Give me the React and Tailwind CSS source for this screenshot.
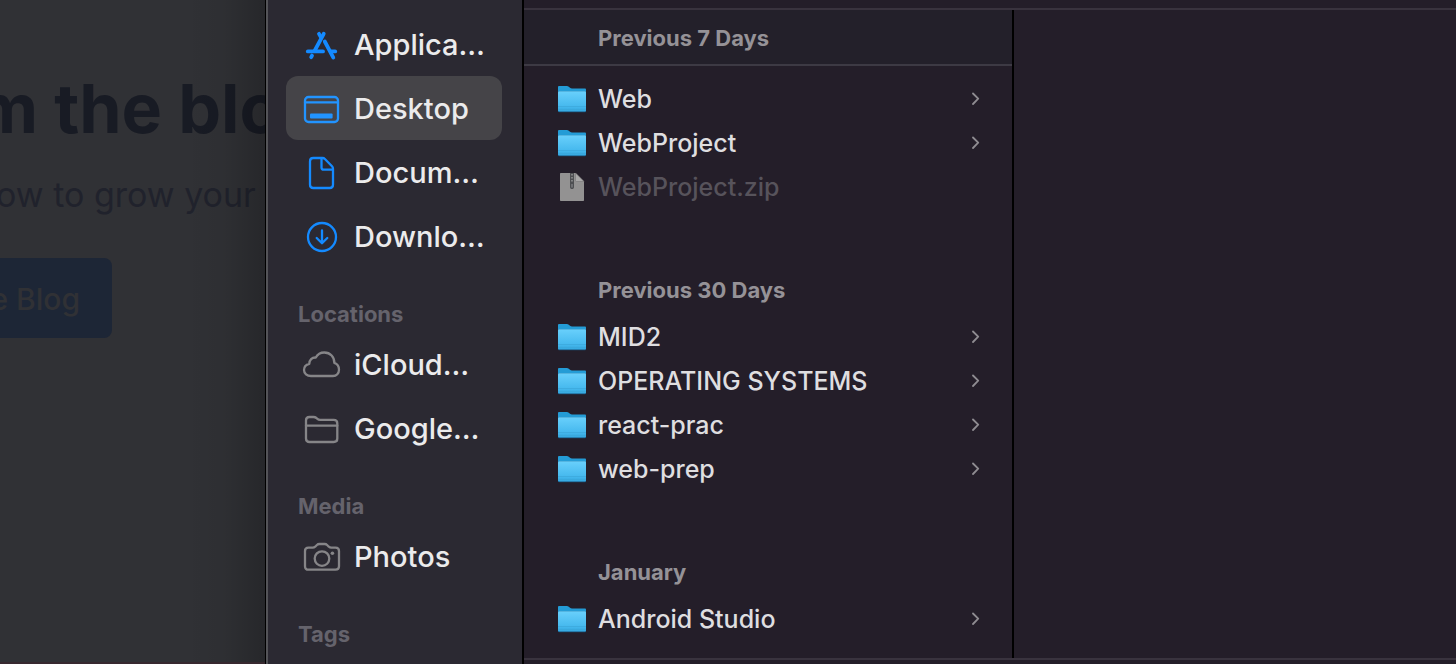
import React from "react";

const AppsIcon = () => (
  <g strokeWidth="3.8">
    <path d="M19.700 7.800 10.800 24.500" />
    <path d="M15 7.800l2 3.600" />
    <path d="M20.800 15.500 29.300 31.600" />
    <path d="M8 29.600l-.8 1.600" />
    <path d="M3.800 25.400H19" />
    <path d="M27 25.400h4.200" />
  </g>
);

const DesktopIcon = () => (
  <g>
    <rect x="1" y="7" width="33" height="25" rx="3.6" />
    <path d="M1 12.400h33" />
    <rect x="6" y="23.400" width="22.600" height="5" rx="1" fill="currentColor" stroke="none" />
  </g>
);

const DocumentIcon = () => (
  <g>
    <path d="M9.300 4h9.200c1 0 1.700.3 2.400 1l7.100 7.300c.7.7 1 1.400 1 2.400v16c0 2-1.200 3.300-3.300 3.300H9.300C7.200 34 6 32.700 6 30.700V7.300C6 5.300 7.200 4 9.300 4Z" />
    <path d="M17.500 4.500v9c0 1.500.8 2.200 2.200 2.200h9" />
  </g>
);

const DownloadIcon = () => (
  <g>
    <circle cx="18" cy="19" r="14" />
    <path d="M18 12.500V25M12.700 20l5.300 5.300 5.300-5.300" />
  </g>
);

const CloudIcon = () => (
  <path d="M7 30h22c3.500 0 6-2.800 6-6.200 0-3.500-2-6-4.700-6.900C30.500 11 26.300 6.500 20.300 6.500c-3.800 0-6.800 1.800-8.500 5C8 11.200 5.300 14 5.300 17.800 2 18.600 0 21 0 24c0 3.400 3 6 7 6Z" />
);

const FolderLineIcon = () => (
  <g>
    <path d="M2 28.500v-18C2 8 3.200 7 5.500 7h4c1.300 0 2 .3 2.900 1l1 .9c.8.7 1.500 1 2.700 1h13.600c2.400 0 3.600 1.100 3.600 3.500v15.100c0 2.400-1.200 3.500-3.600 3.500H5.600C3.200 32 2 30.900 2 28.500Z" />
    <path d="M2 15.700h31.300" />
  </g>
);

const CameraIcon = () => (
  <g>
    <path d="M4.500 9.700h4.300c1.100 0 1.600-.3 2.400-1l1.700-1.700c.7-.7 1.400-1 2.500-1h5.200c1.100 0 1.800.3 2.500 1l1.700 1.700c.8.7 1.300 1 2.400 1h4.300c2.300 0 3.500 1.100 3.500 3.400v15.100c0 2.300-1.200 3.500-3.500 3.500h-27C2.200 31.700 1 30.500 1 28.200V13.100c0-2.300 1.200-3.400 3.500-3.400Z" />
    <circle cx="18" cy="20.600" r="7.300" />
    <circle cx="28.400" cy="15.200" r="1.800" fill="currentColor" stroke="none" />
  </g>
);

const sidebar = [
  {
    items: [
      { label: "Applica…", Icon: AppsIcon },
      { label: "Desktop", Icon: DesktopIcon, active: true },
      { label: "Docum…", Icon: DocumentIcon },
      { label: "Downlo…", Icon: DownloadIcon },
    ],
  },
  {
    title: "Locations",
    muted: true,
    items: [
      { label: "iCloud…", Icon: CloudIcon },
      { label: "Google…", Icon: FolderLineIcon },
    ],
  },
  { title: "Media", muted: true, items: [{ label: "Photos", Icon: CameraIcon }] },
  { title: "Tags", items: [] },
];

const recent = [
  { name: "Web" },
  { name: "WebProject" },
  { name: "WebProject.zip", zip: true },
];

const groups = [
  {
    title: "Previous 30 Days",
    files: [
      { name: "MID2" },
      { name: "OPERATING SYSTEMS" },
      { name: "react-prac" },
      { name: "web-prep" },
    ],
  },
  { title: "January", files: [{ name: "Android Studio" }] },
];

function SidebarItem({ label, Icon, active, muted }) {
  return (
    <li>
      <button
        type="button"
        className={`flex h-16 w-full items-center gap-3.5 rounded-xl px-[18px] text-left text-[29px] leading-9 font-medium text-[#ebebec] ${active ? "bg-[#454448]" : ""}`}
      >
        <svg
          viewBox="0 0 36 36"
          fill="none"
          stroke="currentColor"
          strokeWidth="2.3"
          strokeLinecap="round"
          strokeLinejoin="round"
          aria-hidden="true"
          className={`size-9 shrink-0 overflow-visible ${muted ? "text-[#868588]" : active ? "text-[#2294ff]" : "text-[#148aff]"}`}
        >
          <Icon />
        </svg>
        <span className="pt-0.5 whitespace-nowrap">{label}</span>
      </button>
    </li>
  );
}

function FolderIcon() {
  return (
    <svg viewBox="0 0 28 28" className="size-7 shrink-0 overflow-visible" aria-hidden="true">
      <defs>
        <linearGradient id="front" x1="0" y1="0" x2="0" y2="1">
          <stop offset="0" stopColor="#69d0fc" />
          <stop offset="0.75" stopColor="#46b9ee" />
          <stop offset="1" stopColor="#36a9e0" />
        </linearGradient>
      </defs>
      <path d="M0 2.200C0 1.400.4 1 1.200 1h7.600c.9 0 1.400.3 2 .8l1.200 1c.6.5 1.100.8 2 .8h12.800c.8 0 1.200.4 1.200 1.200V26H0Z" fill="#249cd6" />
      <rect y="6.200" width="28" height="21" rx="1" fill="#17507a" />
      <rect y="6.200" width="28" height="20.200" rx="1" fill="url(#front)" />
      <path d="M0 21.500h28M0 24.400h28" stroke="#3ba6da" strokeWidth="0.7" />
    </svg>
  );
}

function ZipIcon() {
  return (
    <svg viewBox="0 0 28 28" className="size-7 shrink-0" aria-hidden="true">
      <path d="M3 0h14.500L26 8.500V27c0 .7-.3 1-1 1H3c-.7 0-1-.3-1-1V1c0-.7.3-1 1-1Z" fill="#939292" />
      <path d="M17.500 0 26 8.500h-7.500c-.7 0-1-.3-1-1Z" fill="#aaa9a9" stroke="#777677" strokeWidth="0.6" />
      <path d="M12 0h4v14c0 1.400-.8 2-2 2s-2-.6-2-2Z" fill="#4e4f52" />
      <path d="M14 1v9" stroke="#98999a" strokeWidth="1.400" strokeDasharray="1.500 1.500" />
      <path d="M14 11v3.500" stroke="#85868a" strokeWidth="1.200" />
    </svg>
  );
}

function FileRow({ name, zip }) {
  return (
    <li>
      <button
        type="button"
        className={`flex h-11 w-full items-center gap-3 pr-8 pl-[34px] text-left text-[25px] leading-8 font-medium ${zip ? "text-[#57535b]" : "text-[#dfdee0]"}`}
      >
        {zip ? <ZipIcon /> : <FolderIcon />}
        <span className="flex-1 whitespace-nowrap">{name}</span>
        {!zip && (
          <svg
            viewBox="0 0 8 14"
            fill="none"
            stroke="#8f8c91"
            strokeWidth="1.800"
            strokeLinecap="round"
            strokeLinejoin="round"
            className="h-3.5 w-2 shrink-0"
            aria-hidden="true"
          >
            <path d="M1 1.500 6.200 6.700 1 12" />
          </svg>
        )}
      </button>
    </li>
  );
}

export default function App() {
  return (
    <div className="flex h-screen overflow-hidden bg-[#241e29] font-['Inter','Liberation_Sans',sans-serif]">
      <section className="relative w-[265px] shrink-0 overflow-hidden border-b-2 border-[#37282f] bg-[#303135] pt-[66px] whitespace-nowrap">
        <h1 className="-ml-6 text-[68px] leading-[84px] font-bold text-[#181b24]">m the blo</h1>
        <p className="-ml-1 pt-6 text-[34px] leading-[42px] text-[#20222c]">ow to grow your</p>
        <a
          href="#blog"
          className="mt-[42px] flex h-20 w-28 items-center justify-end rounded-r-lg bg-[#1d2636] pt-0.5 pr-8 text-[30px] font-medium text-[#303135]"
        >
          e Blog
        </a>
        <div className="pointer-events-none absolute inset-y-0 right-0 w-20 bg-linear-to-r from-transparent via-black/5 to-black/20" />
      </section>

      <main className="flex min-w-0 flex-1 border-l border-black">
        <nav aria-label="Sidebar" className="w-[258px] shrink-0 border-r-2 border-l-2 border-r-black border-l-[#545458] bg-[#2b2932] pt-3 pr-5 pl-[18px]">
          {sidebar.map(({ title, items, muted }, i) => (
            <section key={i}>
              {title && (
                <h2 className="h-16 pt-7 pl-3 text-[22px] leading-9 font-bold text-[#65636c]">{title}</h2>
              )}
              <ul>
                {items.map((item) => (
                  <SidebarItem key={item.label} muted={muted} {...item} />
                ))}
              </ul>
            </section>
          ))}
        </nav>

        <div className="flex min-w-0 flex-1 flex-col pt-2 pb-1">
          <div className="flex min-h-0 flex-1 border-y-2 border-[#39333e]">
            <section className="w-[490px] shrink-0 overflow-hidden border-r-2 border-black">
              <h2 className="h-14 border-b-2 border-[#3d3a44] bg-[#23202a] pl-[74px] text-[22px] leading-[56px] font-bold text-[#959297]">
                Previous 7 Days
              </h2>
              <ul className="pt-[11px]">
                {recent.map((f) => (
                  <FileRow key={f.name} {...f} />
                ))}
              </ul>
              {groups.map(({ title, files }) => (
                <section key={title} className="pt-14">
                  <h2 className="pl-[74px] text-[22px] leading-[50px] font-bold text-[#959297]">{title}</h2>
                  <ul>
                    {files.map((f) => (
                      <FileRow key={f.name} {...f} />
                    ))}
                  </ul>
                </section>
              ))}
            </section>
          </div>
        </div>
      </main>
    </div>
  );
}
